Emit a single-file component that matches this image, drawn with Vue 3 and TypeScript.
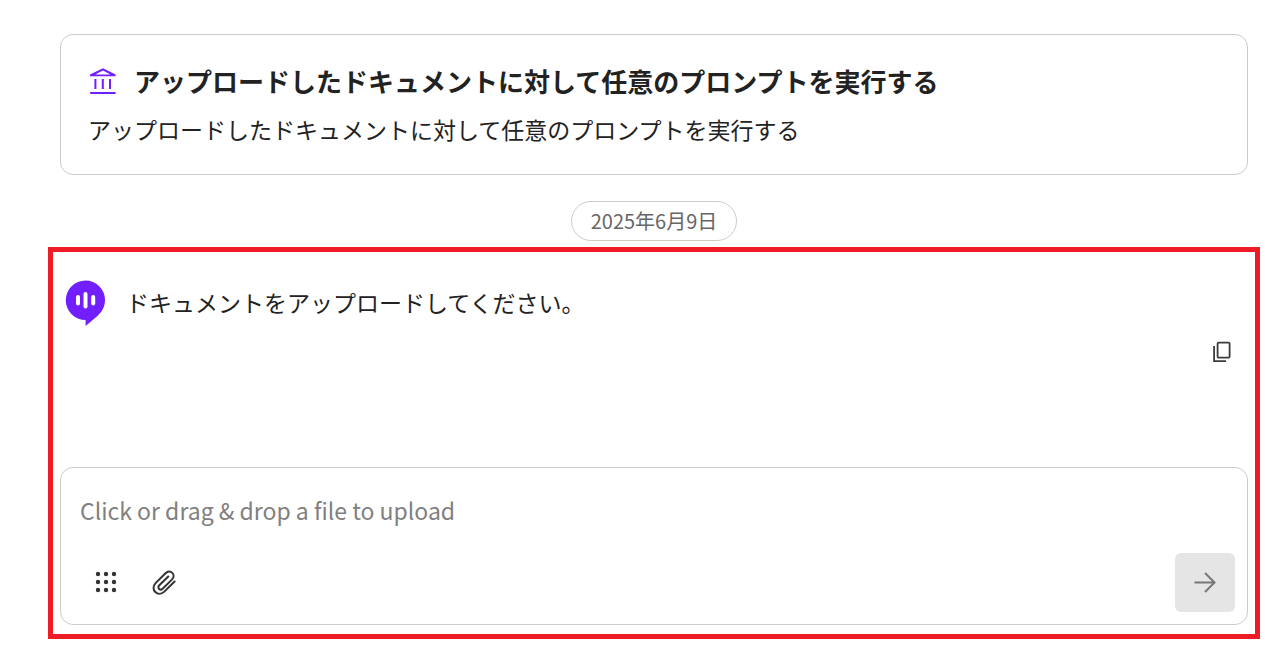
<script setup lang="ts">
import { ref } from 'vue'

const title = 'アップロードしたドキュメントに対して任意のプロンプトを実行する'
const description = 'アップロードしたドキュメントに対して任意のプロンプトを実行する'
const date = '2025年6月9日'
const message = 'ドキュメントをアップロードしてください。'
const draft = ref('')
const dots = [3, 11, 19]

function copyMessage(): void {
  navigator.clipboard?.writeText(message)
}
</script>

<template>
  <main class="page">
    <header class="card">
      <h1 class="title">
        <svg class="title-icon" viewBox="0 0 28 28" aria-hidden="true">
          <path
            d="M2 9.2V7.6L15 1.2l12.600 6.400v1.600zM7.200 7.400h15.200L15 3.400zM6.400 12h2v10h-2zM13.800 12h2v10h-2zM21 12h2v10h-2zM2.200 25h25.400v2H2.200z"
            fill="#711ffe"
            fill-rule="evenodd"
          />
        </svg>
        <span>{{ title }}</span>
      </h1>
      <p class="description">{{ description }}</p>
    </header>

    <time class="date" datetime="2025-06-09">{{ date }}</time>

    <section class="chat">
      <article class="message">
        <svg class="avatar" viewBox="0 0 40 46" aria-hidden="true">
          <path d="M20.500.500a19.500 19.500 0 0 1 19.500 19.500c0 6.400-2.800 11.400-7 15.400L20.600 46v-6h-.1a19.700 19.700 0 0 1 0-39.500z" fill="#711ffe" />
          <rect x="11" y="15" width="4" height="10.500" rx="2" fill="#fff" />
          <rect x="18.500" y="12" width="4" height="16.500" rx="2" fill="#fff" />
          <rect x="26.200" y="15" width="4" height="10.500" rx="2" fill="#fff" />
        </svg>
        <p class="message-text">{{ message }}</p>
      </article>
      <button class="copy" type="button" aria-label="Copy" @click="copyMessage">
        <svg width="20" height="22" viewBox="0 0 20 22" aria-hidden="true">
          <g fill="none" stroke="#3c3c3c" stroke-width="1.800">
            <rect x="5.600" y="1.600" width="12" height="15" rx="1" />
            <path d="M2.100 5v15.200h12" />
          </g>
        </svg>
      </button>

      <form class="composer" @submit.prevent>
        <input
          v-model="draft"
          class="field"
          type="text"
          aria-label="Click or drag &amp; drop a file to upload"
          placeholder="Click or drag &amp; drop a file to upload"
        />
        <div class="toolbar">
          <button class="tool" type="button" aria-label="Apps">
            <svg width="22" height="22" viewBox="0 0 22 22" fill="#333" aria-hidden="true">
              <template v-for="y in dots" :key="y">
                <circle v-for="x in dots" :key="x" :cx="x" :cy="y" r="2.200" />
              </template>
            </svg>
          </button>
          <button class="tool" type="button" aria-label="Attach file">
            <svg width="26" height="28" viewBox="0 0 26 28" aria-hidden="true">
              <path
                d="M17.300 8.500 8.300 17.300c-2.600 2.700.900 5.800 3.300 3.400l9.300-9.100c4.700-4.900-1.500-11-6.400-6.400L4.800 14.900c-6.500 6.600 2.400 14.700 8.500 8.700L23.600 13.500"
                fill="none"
                stroke="#333"
                stroke-width="2"
                stroke-linecap="round"
                stroke-linejoin="round"
              />
            </svg>
          </button>
          <button class="send" type="submit" aria-label="Send">
            <svg width="22" height="22" viewBox="0 0 22 22" aria-hidden="true">
              <path d="M.500 10.500H21M11 1l9.500 9.500L11 20" fill="none" stroke="#777" stroke-width="2" />
            </svg>
          </button>
        </div>
      </form>
    </section>
  </main>
</template>

<style>
body {
  margin: 0;
  background: #fff;
}
</style>

<style scoped>
.page {
  box-sizing: border-box;
  min-height: 100vh;
  padding: 34px 5px 6px 48px;
  display: flex;
  flex-direction: column;
  color: #222;
  font-family: "Noto Sans CJK JP", sans-serif;
}

.card,
.composer {
  border: 1px solid #ccc;
  border-radius: 13px;
  background: #fff;
}

.card {
  margin: 0 12px;
  padding: 27px;
}

.title {
  margin: 0;
  display: flex;
  align-items: center;
  gap: 18px;
  font-size: 26px;
  line-height: 38px;
  font-weight: 700;
}

.title-icon {
  flex: none;
  width: 28px;
  height: 28px;
}

.description {
  margin: 12px 0 0;
  font-size: 23px;
  line-height: 35px;
}

.date {
  align-self: center;
  margin: 26px 0 6px;
  padding: 0 19px;
  border: 1px solid #ccc;
  border-radius: 20px;
  color: #666;
  font-size: 20px;
  line-height: 38px;
}

.chat {
  flex: 1;
  display: flex;
  flex-direction: column;
  padding: 28px 7px 9px;
  border: 5px solid #ee1c25;
}

.message {
  display: flex;
  align-items: flex-start;
  gap: 21px;
  padding-left: 5px;
}

.avatar {
  flex: none;
  width: 40px;
  height: 46px;
}

.message-text {
  margin: 5px 0 0;
  font-size: 23px;
  line-height: 35px;
}

button {
  display: flex;
  align-items: center;
  justify-content: center;
  padding: 0;
  border: 0;
  background: none;
  cursor: pointer;
}

.copy {
  align-self: flex-end;
  width: 40px;
  height: 40px;
  margin: 6px 6px 0 0;
}

.composer {
  margin-top: auto;
  padding: 24px 12px 12px 19px;
}

.field {
  display: block;
  box-sizing: border-box;
  width: 100%;
  height: 36px;
  padding: 0;
  border: 0;
  outline: 0;
  background: none;
  color: #222;
  font-family: inherit;
  font-size: 23px;
}

.field::placeholder {
  color: #808080;
  opacity: 1;
}

.toolbar {
  display: flex;
  align-items: center;
  gap: 6px;
  margin-top: 25px;
}

.tool {
  width: 52px;
  height: 58px;
  padding-bottom: 2px;
}

.send {
  width: 60px;
  height: 59px;
  margin-left: auto;
  border-radius: 6px;
  background: #e5e5e5;
}
</style>
